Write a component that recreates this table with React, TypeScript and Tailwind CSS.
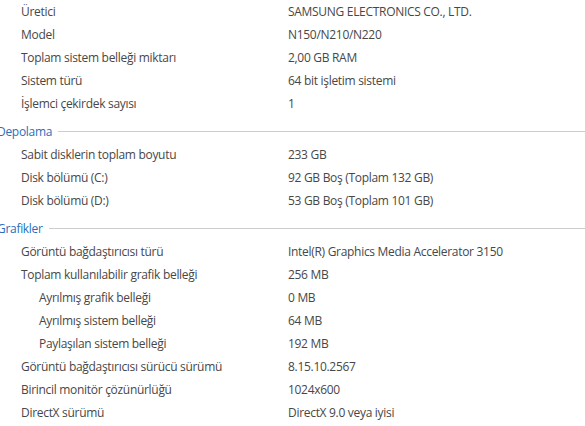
type Row = { label: string; value: string; indent?: boolean };

const system: Row[] = [
  { label: "Üretici", value: "SAMSUNG ELECTRONICS CO., LTD." },
  { label: "Model", value: "N150/N210/N220" },
  { label: "Toplam sistem belleği miktarı", value: "2,00 GB RAM" },
  { label: "Sistem türü", value: "64 bit işletim sistemi" },
  { label: "İşlemci çekirdek sayısı", value: "1" },
];

const storage: Row[] = [
  { label: "Sabit disklerin toplam boyutu", value: "233 GB" },
  { label: "Disk bölümü (C:)", value: "92 GB Boş (Toplam 132 GB)" },
  { label: "Disk bölümü (D:)", value: "53 GB Boş (Toplam 101 GB)" },
];

const graphics: Row[] = [
  { label: "Görüntü bağdaştırıcısı türü", value: "Intel(R) Graphics Media Accelerator 3150" },
  { label: "Toplam kullanılabilir grafik belleği", value: "256 MB" },
  { label: "Ayrılmış grafik belleği", value: "0 MB", indent: true },
  { label: "Ayrılmış sistem belleği", value: "64 MB", indent: true },
  { label: "Paylaşılan sistem belleği", value: "192 MB", indent: true },
  { label: "Görüntü bağdaştırıcısı sürücü sürümü", value: "8.15.10.2567" },
  { label: "Birincil monitör çözünürlüğü", value: "1024x600" },
  { label: "DirectX sürümü", value: "DirectX 9.0 veya iyisi" },
];

function InfoRow({ row }: { row: Row }) {
  return (
    <div className="flex h-[23px] items-center whitespace-nowrap">
      <div className={row.indent ? "w-[288px] pl-[39px]" : "w-[288px] pl-[21px]"}>{row.label}</div>
      <div>{row.value}</div>
    </div>
  );
}

function SectionHeader({ title }: { title: string }) {
  return (
    <div className="flex h-[28px] items-center pt-[5px]">
      <span className="-ml-[3px] text-[#2a6ebb]">{title}</span>
      <div className="ml-[6px] h-px flex-1 bg-[#cdcdcd]" />
    </div>
  );
}

export default function App() {
  return (
    <div
      className="h-[426px] w-[585px] overflow-hidden bg-white text-[12px] tracking-[-0.3px] text-[#474747]"
      style={{ fontFamily: '"Open Sans", "Noto Sans", sans-serif' }}
    >
      {system.map((r) => (
        <InfoRow key={r.label} row={r} />
      ))}
      <SectionHeader title="Depolama" />
      {storage.map((r) => (
        <InfoRow key={r.label} row={r} />
      ))}
      <SectionHeader title="Grafikler" />
      {graphics.map((r) => (
        <InfoRow key={r.label} row={r} />
      ))}
    </div>
  );
}
